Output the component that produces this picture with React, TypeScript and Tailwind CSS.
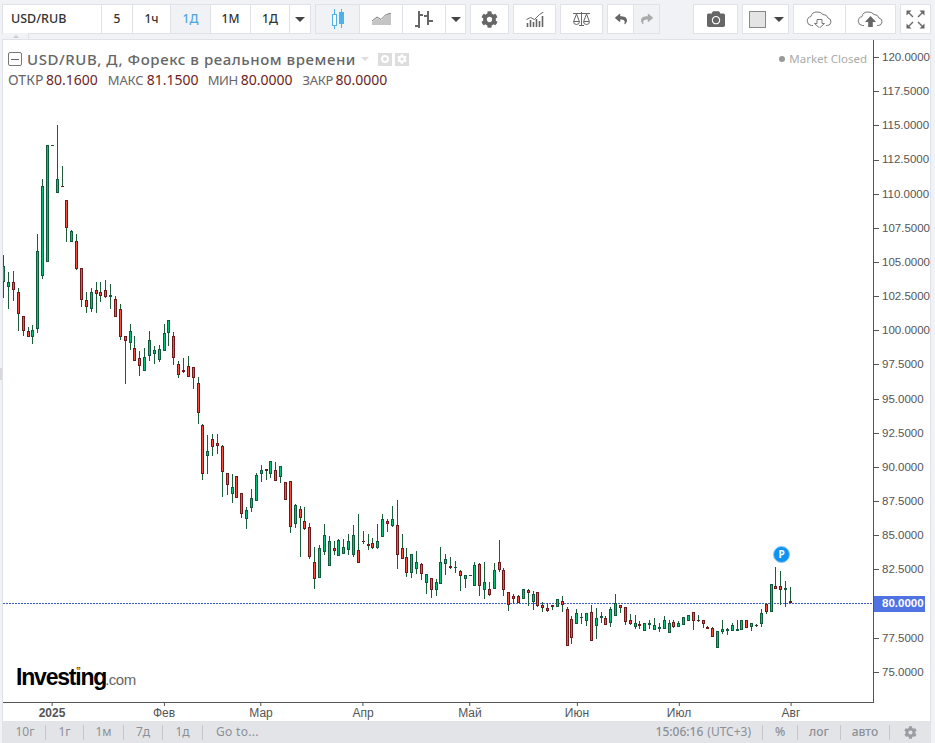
import { FaCamera, FaCog, FaReply, FaShare } from "react-icons/fa";

type Row = [number, number, number, number, 0 | 1];

// wick top, wick bottom, body top, body bottom, 1 = up candle. values are 3x page px from base
const blocks: { base: number; rows: Row[] }[] = [
  {
    base: 110,
    rows: [
      [435, 563, 468, 517, 1], [486, 596, 517, 530, 1], [483, 572, 517, 539, 0], [534, 662, 547, 611, 0],
      [619, 677, 619, 662, 0], [652, 682, 664, 680, 0], [645, 701, 661, 680, 1], [372, 668, 424, 658, 1],
      [207, 506, 229, 497, 1], [105, 455, 105, 455, 1], [105, 105, 105, 107, 1], [45, 250, 208, 250, 1],
      [168, 230, 229, 231, 0], [271, 395, 271, 353, 0], [361, 395, 364, 395, 1], [372, 479, 394, 476, 0],
      [475, 590, 475, 569, 0], [546, 608, 571, 590, 0], [534, 605, 547, 596, 1], [517, 608, 541, 551, 0],
      [517, 575, 547, 557, 0], [510, 563, 541, 560, 0], [522, 596, 556, 560, 1], [559, 620, 568, 620, 0],
      [583, 689, 598, 680, 0], [679, 821, 679, 692, 0], [643, 719, 664, 698, 1], [679, 752, 715, 752, 0],
      [722, 797, 745, 767, 0], [714, 782, 742, 782, 1], [664, 752, 691, 737, 1], [709, 761, 721, 731, 1],
      [706, 755, 718, 749, 1], [642, 722, 670, 722, 1], [631, 707, 631, 670, 1], [667, 764, 679, 743, 0],
      [754, 803, 763, 794, 0], [745, 788, 781, 785, 0], [739, 800, 769, 800, 0], [772, 836, 772, 803, 0],
    ],
  },
  {
    base: 370,
    rows: [
      [22, 161, 40, 128, 0], [163, 329, 166, 311, 0], [195, 311, 244, 257, 1], [192, 257, 208, 230, 0],
      [192, 251, 220, 227, 0], [225, 380, 229, 305, 0], [310, 374, 310, 344, 0], [312, 398, 352, 371, 1],
      [319, 383, 319, 383, 0], [370, 443, 370, 431, 0], [411, 476, 421, 446, 1], [358, 426, 385, 413, 1],
      [309, 392, 316, 392, 1], [285, 335, 301, 311, 1], [298, 329, 298, 302, 0], [274, 323, 274, 311, 1],
      [277, 332, 301, 332, 0], [289, 338, 289, 320, 1], [337, 389, 337, 389, 0], [334, 488, 334, 470, 0],
      [403, 473, 406, 461, 1], [408, 560, 418, 443, 0], [411, 479, 454, 476, 0], [460, 566, 472, 560, 0],
      [531, 656, 577, 628, 0], [525, 623, 535, 623, 1], [462, 554, 496, 545, 1], [499, 587, 514, 587, 1],
      [513, 554, 535, 542, 0], [507, 557, 511, 557, 1], [507, 551, 532, 551, 1], [492, 554, 514, 539, 1],
      [465, 560, 496, 554, 1], [432, 578, 541, 578, 0], [483, 521, 514, 516, 0], [492, 539, 523, 527, 0],
      [505, 536, 520, 533, 0], [462, 536, 514, 533, 1], [432, 500, 448, 500, 1], [447, 485, 454, 461, 0],
      [408, 470, 448, 467, 1], [390, 596, 466, 556, 0], [492, 566, 535, 566, 0],
    ],
  },
  {
    base: 490,
    rows: [
      [174, 262, 202, 248, 0], [193, 264, 193, 248, 1], [183, 252, 217, 236, 1], [220, 270, 223, 251, 0],
      [253, 312, 253, 278, 1], [265, 324, 265, 299, 0], [268, 318, 277, 299, 1], [171, 281, 217, 281, 1],
      [192, 254, 208, 221, 1], [201, 236, 229, 233, 0], [213, 249, 232, 233, 1], [241, 303, 244, 257, 0],
      [256, 294, 256, 266, 1], [256, 256, 256, 257, 1], [217, 287, 226, 287, 1], [220, 318, 223, 287, 0],
      [216, 327, 277, 299, 1], [277, 318, 298, 314, 0], [220, 296, 241, 296, 1], [150, 245, 217, 239, 0],
      [235, 318, 241, 299, 0], [307, 362, 307, 346, 0], [312, 341, 319, 326, 0], [316, 340, 319, 340, 0],
      [298, 326, 298, 326, 1], [298, 347, 301, 308, 0], [304, 359, 313, 335, 1], [307, 350, 307, 349, 0],
      [337, 365, 346, 353, 0], [340, 365, 355, 362, 0], [346, 359, 346, 350, 0], [328, 350, 328, 350, 1],
      [318, 365, 334, 344, 0], [350, 467, 358, 467, 0], [377, 462, 388, 443, 0], [358, 401, 370, 401, 1],
      [370, 401, 381, 383, 1], [370, 407, 370, 392, 1], [346, 452, 367, 452, 0], [355, 446, 385, 407, 1],
      [366, 398, 379, 383, 1], [379, 404, 385, 404, 0],
    ],
  },
  {
    base: 530,
    rows: [
      [232, 290, 238, 280, 1], [192, 257, 220, 257, 1], [225, 248, 225, 233, 0], [232, 285, 232, 275, 0],
      [252, 285, 270, 282, 0], [255, 297, 280, 290, 1], [274, 298, 283, 288, 0], [280, 303, 280, 302, 1],
      [270, 297, 280, 284, 1], [265, 300, 286, 299, 1], [279, 305, 292, 296, 1], [258, 296, 270, 296, 1],
      [270, 308, 280, 308, 1], [270, 293, 277, 292, 0], [274, 290, 280, 290, 1], [262, 284, 262, 284, 1],
      [255, 272, 255, 272, 1], [247, 300, 247, 272, 0], [255, 276, 270, 272, 0], [270, 293, 270, 281, 0],
      [289, 297, 292, 296, 0], [292, 320, 295, 320, 0], [302, 353, 304, 353, 1], [270, 312, 298, 305, 1],
      [295, 315, 298, 302, 1], [280, 302, 286, 302, 1], [271, 302, 298, 302, 1], [270, 299, 270, 299, 1],
      [270, 293, 270, 293, 0], [279, 304, 280, 290, 1], [281, 290, 284, 288, 0], [236, 291, 250, 282, 1],
      [218, 251, 221, 245, 0], [162, 245, 162, 245, 1], [112, 177, 169, 176, 0], [124, 224, 169, 179, 0],
      [153, 231, 175, 179, 1], [171, 220, 214, 220, 0],
    ],
  },
];

const candles = blocks.flatMap((b) =>
  b.rows.map(([wt, wb, bt, bb, up]) => ({
    wt: Math.round(b.base + wt / 3),
    wb: Math.round(b.base + wb / 3),
    bt: Math.round(b.base + bt / 3),
    bb: Math.round(b.base + bb / 3),
    up,
  }))
);

const prices = [
  "120.0000", "117.5000", "115.0000", "112.5000", "110.0000", "107.5000", "105.0000", "102.5000", "100.0000",
  "97.5000", "95.0000", "92.5000", "90.0000", "87.5000", "85.0000", "82.5000", "80.0000", "77.5000", "75.0000",
];

const months = [
  { label: "2025", x: 49, bold: true },
  { label: "Фев", x: 161 },
  { label: "Мар", x: 258 },
  { label: "Апр", x: 360 },
  { label: "Май", x: 467 },
  { label: "Июн", x: 574 },
  { label: "Июл", x: 676 },
  { label: "Авг", x: 788 },
];

const ohlc = [
  { k: "ОТКР", v: "80.1600", cls: "w-[36px] mr-[2px]" },
  { k: "МАКС", v: "81.1500", cls: "w-[36px] ml-[10px] mr-[3px] text-[13px] tracking-[-0.2px]" },
  { k: "МИН", v: "80.0000", cls: "w-[30px] ml-[9px] mr-[3px] text-[13px] tracking-[-0.4px]" },
  { k: "ЗАКР", v: "80.0000", cls: "w-[31px] ml-[10px] mr-[2px] text-[13px] tracking-[-0.3px]" },
];

function Chart() {
  return (
    <svg viewBox="3 40 870 662" className="absolute inset-0 w-[870px] h-[662px]" shapeRendering="crispEdges">
      <line x1="3" x2="873" y1="603.5" y2="603.5" stroke="#3f5fc4" strokeDasharray="2 1" />
      {candles.map((c, i) => {
        const x = Math.round(3.33 + i * 4.856);
        const h = Math.max(1, c.bb - c.bt);
        return (
          <g key={i}>
            {c.wb > c.wt && <rect x={x} y={c.wt} width="1" height={c.wb - c.wt} fill="#1d5c38" />}
            <rect x={x - 1} y={c.bt} width="3" height={h} fill={c.up ? "#0f5c3c" : "#6f1a1a"} />
            {h > 2 && <rect x={x} y={c.bt + 1} width="1" height={h - 2} fill={c.up ? "#00c472" : "#ff4b3e"} />}
          </g>
        );
      })}
    </svg>
  );
}

function Caret({ color = "#444" }: { color?: string }) {
  return <span className="w-0 h-0 border-x-[5px] border-x-transparent border-t-[5px]" style={{ borderTopColor: color }} />;
}

function Btn({ className = "", children }: { className?: string; children?: React.ReactNode }) {
  return <div className={`flex items-center justify-center h-full border-l border-[#dfe2e8] first:border-l-0 ${className}`}>{children}</div>;
}

function Group({ className = "", children }: { className?: string; children: React.ReactNode }) {
  return <div className={`flex h-[30px] bg-white border border-[#dfe2e8] ${className}`}>{children}</div>;
}

function CandlesIcon() {
  return (
    <svg width="14" height="20" viewBox="0 0 14 20" fill="none" stroke="#4fb1e8">
      <path d="M3.5 0v20M10.5 0v19" />
      <rect x="1.5" y="5.5" width="4" height="11" fill="#fff" />
      <rect x="8.5" y="3.5" width="4" height="11" fill="#4fb1e8" />
    </svg>
  );
}

function AreaIcon() {
  return (
    <svg width="19" height="12" viewBox="0 0 19 12" fill="#c4c4c4">
      <path d="M0 12V9l5-4 4 2.5L13.5 3 19 0v12z" />
      <path d="M0 8l5-4 4 2.5L13.5 2 19 0" fill="none" stroke="#777" />
    </svg>
  );
}

function BarsIcon() {
  return (
    <svg width="18" height="17" viewBox="0 0 18 17" fill="none" stroke="#666" strokeWidth="2">
      <path d="M4 0v17M0 15h4M4 4h4M13 0v14M9 5h4M13 10h5" />
    </svg>
  );
}

function IndicatorIcon() {
  return (
    <svg width="18" height="15" viewBox="0 0 18 15" fill="none" stroke="#666">
      <path d="M.5 7.5l4-2 4 2 5-5 4-2.5" />
      <path d="M1.5 15v-4M4.5 15V8M7.5 15v-5M10.5 15V7M13.5 15V9M16.5 15V4" strokeWidth="1.6" />
    </svg>
  );
}

function ScaleIcon() {
  return (
    <svg width="17" height="14" viewBox="0 0 17 14" fill="none" stroke="#666">
      <path d="M0 1.5h17M8.5 0v14M3.5 2L.8 9M3.5 2l2.7 7M13.5 2l-2.7 7M13.5 2l2.7 7" />
      <path d="M.5 9.5h6a3 3 0 0 1-6 0zM10.5 9.5h6a3 3 0 0 1-6 0zM6 13.5h5" />
    </svg>
  );
}

function CloudIcon({ solid }: { solid?: boolean }) {
  return (
    <svg width="27" height="18" viewBox="0 0 27 18" fill="none" stroke="#777">
      <path d="M7 15.5H5.5a4.5 4.5 0 0 1-.6-8.9A6 6 0 0 1 11 2a7 7 0 0 1 6 2.5 5 5 0 0 1 5 3.5 3.8 3.8 0 0 1-.5 7.5H20" />
      {solid ? (
        <path d="M13.5 6l5.5 6h-3.2v5h-4.6v-5H8z" fill="#666" stroke="none" />
      ) : (
        <path d="M11 9.5h5v4h2.5l-5 4.5-5-4.5H11z" fill="#fff" />
      )}
    </svg>
  );
}

function FullscreenIcon() {
  return (
    <svg width="19" height="19" viewBox="0 0 19 19" fill="#666" stroke="#666">
      <path d="M.5.5h5l-5 5zM18.5.5h-5l5 5zM13.5 18.5h5v-5zM5.5 18.5h-5v-5z" strokeWidth="0" />
      <path d="M2 2l5 5M17 2l-5 5M2 17l5-5M17 17l-5-5" strokeWidth="1.4" />
    </svg>
  );
}

function Logo() {
  return (
    <div className="absolute left-[13px] top-[622px] flex items-baseline font-['Liberation_Sans',sans-serif] text-black">
      <span className="relative text-[23px] leading-[30px] font-bold tracking-[-1.2px]">
        Investing
        <span className="absolute left-[61px] top-[5px] w-[3px] h-[3px] rounded-full bg-[#f5a623]" />
      </span>
      <span className="text-[15px] text-[#666] tracking-[-0.5px] -ml-[1px]">.com</span>
    </div>
  );
}

function Legend() {
  return (
    <div className="absolute left-[5px] top-[9px] right-[6px] font-['Noto_Sans',sans-serif]">
      <div className="flex items-center h-[20px]">
        <span className="flex items-center justify-center w-[14px] h-[14px] border border-[#777] rounded-[2px] mr-[5px]">
          <span className="w-[8px] h-px bg-[#666]" />
        </span>
        <span className="text-[15px] font-medium tracking-[0.56px] text-[#666] whitespace-nowrap">USD/RUB, Д, Форекс в реальном времени</span>
        <span className="ml-[5px] w-0 h-0 border-x-[4px] border-x-transparent border-t-[4px] border-t-[#ddd]" />
        <span className="ml-[9px] flex items-center justify-center w-[14px] h-[13px] bg-[#ddd]">
          <span className="w-[8px] h-[8px] rounded-full border-2 border-white" />
        </span>
        <span className="ml-[3px] flex items-center justify-center w-[14px] h-[13px] bg-[#ddd]">
          <FaCog className="w-[10px] h-[10px] text-white" />
        </span>
        <span className="ml-auto -mt-[1px] flex items-center text-[11.5px] text-[#aaa]">
          <span className="w-[6px] h-[6px] rounded-full bg-[#999] mr-[4px]" />
          Market Closed
        </span>
      </div>
      <div className="flex items-center h-[21px] text-[14px] whitespace-nowrap">
        {ohlc.map((o) => (
          <span key={o.k} className="flex items-baseline">
            <span className={`text-[#666] ${o.cls}`}>{o.k}</span>
            <span className="text-[#6b1e1e]">{o.v}</span>
          </span>
        ))}
      </div>
    </div>
  );
}

function FootItem({ className = "", children }: { className?: string; children: React.ReactNode }) {
  return <div className={`flex items-center justify-center h-[15px] border-r border-[#c4c6cb] ${className}`}>{children}</div>;
}

export default function App() {
  return (
    <div className="h-[743px] w-[935px] overflow-hidden bg-[#f0f2f6] relative font-['Noto_Sans',sans-serif]">
      <div className="absolute left-0 top-[368px] w-[2px] h-[12px] bg-[#d9d9d9]" />
      {/* toolbar */}
      <div className="flex gap-[4px] h-[39px] pt-[4px] pl-[2px] text-[12px] font-medium text-[#333]">
        <Group className="w-[309px]">
          <Btn className="w-[98px] !justify-start pl-[8px] text-[12.5px]">USD/RUB</Btn>
          <Btn className="w-[31px]">5</Btn>
          <Btn className="w-[38px]">1ч</Btn>
          <Btn className="w-[40px] bg-[#f0f2f6] text-[#4fa6e0]">1Д</Btn>
          <Btn className="w-[40px]">1М</Btn>
          <Btn className="w-[39px]">1Д</Btn>
          <Btn className="flex-1"><Caret /></Btn>
        </Group>
        <Group className="w-[151px]">
          <Btn className="w-[43px] bg-[#f0f2f6]"><CandlesIcon /></Btn>
          <Btn className="w-[43px]"><AreaIcon /></Btn>
          <Btn className="w-[43px]"><BarsIcon /></Btn>
          <Btn className="flex-1"><Caret /></Btn>
        </Group>
        <Group className="w-[39px] items-center justify-center"><FaCog className="w-[17px] h-[17px] text-[#666]" /></Group>
        <Group className="w-[43px] items-center justify-center"><IndicatorIcon /></Group>
        <Group className="w-[43px] items-center justify-center"><ScaleIcon /></Group>
        <Group className="w-[53px]">
          <Btn className="w-[25px]"><FaReply className="w-[14px] h-[12px] text-[#666]" /></Btn>
          <Btn className="flex-1 bg-[#f0f2f6]"><FaShare className="w-[14px] h-[12px] text-[#aaa]" /></Btn>
        </Group>
        <Group className="w-[45px] ml-[29px] items-center justify-center"><FaCamera className="w-[20px] h-[18px] text-[#666]" /></Group>
        <Group className="w-[47px] items-center pl-[6px] gap-[8px]">
          <span className="w-[17px] h-[17px] bg-[#e4e4e4] border border-[#888]" />
          <Caret />
        </Group>
        <Group className="w-[103px]">
          <Btn className="w-[51px]"><CloudIcon /></Btn>
          <Btn className="flex-1"><CloudIcon solid /></Btn>
        </Group>
        <Group className="w-[31px] items-center justify-center"><FullscreenIcon /></Group>
      </div>
      <div className="absolute left-[3px] top-[33px] w-[26px] h-[6px] bg-[#f0f2f6] border-r border-[#dfe2e8] flex justify-center items-center">
        <span className="w-0 h-0 border-x-[3px] border-x-transparent border-b-[3px] border-b-[#c9ccd3]" />
      </div>

      {/* chart box */}
      <div className="ml-[2px] w-[929px] h-[704px] bg-white border-x border-t border-[#dfe2e8] flex flex-col">
        <div className="flex h-[663px]">
          <div className="relative w-[871px] border-r border-b border-[#555]">
            <Chart />
            <Legend />
            <Logo />
            <span className="absolute left-[770px] top-[506px] flex items-center justify-center w-[17px] h-[17px] rounded-full bg-[#0e93f5] border border-[#8cc8f5] text-[10px] font-bold text-white">P</span>
          </div>
          <div className="relative flex-1 pt-[0.5px] font-['Liberation_Sans',sans-serif] text-[11.5px] text-[#555]">
            {prices.map((p) => (
              <div key={p} className="flex items-center h-[34.17px] whitespace-nowrap">
                <span className="w-[5px] h-px bg-[#555] mr-[3px]" />
                {p}
              </div>
            ))}
            <div className="absolute left-0 top-[556px] w-[51px] h-[16px] bg-[#4f73e3] text-white font-bold flex items-center pl-[8px]">80.0000</div>
          </div>
        </div>
        <div className="relative h-[18px] font-['Liberation_Sans',sans-serif] text-[12px] text-[#555]">
          {months.map((m) => (
            <div key={m.label} className={`absolute top-0 -translate-x-1/2 flex flex-col items-center leading-[15px] ${m.bold ? "font-bold" : ""}`} style={{ left: m.x }}>
              <span className="w-px h-[3px] bg-[#555]" />
              {m.label}
            </div>
          ))}
        </div>
        <div className="h-[22px] bg-[#e3e4e7] flex items-center text-[12px] text-[#8c9097]">
          <FootItem className="w-[43px] pl-[2px]">10г</FootItem>
          <FootItem className="w-[38px]">1г</FootItem>
          <FootItem className="w-[40px]">1м</FootItem>
          <FootItem className="w-[39px]">7д</FootItem>
          <FootItem className="w-[40px]">1д</FootItem>
          <div className="pl-[13px] tracking-[0.3px]">Go to...</div>
          <FootItem className="ml-auto w-[106px] !justify-end pr-[11px] gap-[4px]">
            <span className="font-medium">15:06:16</span> <span>(UTC+3)</span>
          </FootItem>
          <FootItem className="w-[35px] font-medium">%</FootItem>
          <FootItem className="w-[43px] font-medium">лог</FootItem>
          <FootItem className="w-[49px] font-medium">авто</FootItem>
          <div className="flex justify-center w-[40px]"><FaCog className="w-[13px] h-[13px] text-[#9a9da3]" /></div>
        </div>
      </div>
    </div>
  );
}
